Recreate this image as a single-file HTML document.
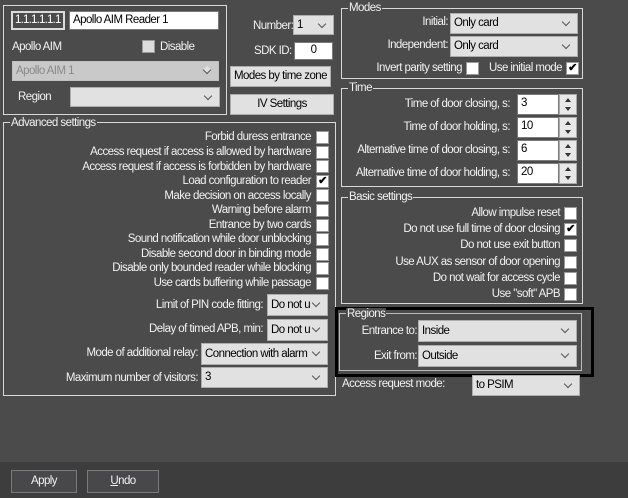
<!DOCTYPE html>
<html><head><meta charset="utf-8"><style>
*{box-sizing:border-box;margin:0;padding:0}
body{width:628px;height:498px;background:#4b4b4b;font-family:"Liberation Sans",sans-serif;font-size:11.5px;letter-spacing:-0.55px;color:#f2f2f2;position:relative;overflow:hidden}
.a{position:absolute;white-space:nowrap}
.gb{position:absolute;border:1px solid #d8d8d8}
.gl{position:absolute;background:#4b4b4b;padding:0 1px;line-height:12px;color:#f2f2f2}
.r{position:absolute;white-space:nowrap;text-align:right;line-height:14px}
.cb{position:absolute;width:13px;height:13px;background:#fff;border:1px solid #9a9a9a;color:#000;font-size:11px;line-height:11px;text-align:center;font-weight:bold}
.dd{position:absolute;background:#e1e1e1;border:1px solid #adadad;color:#000;padding-left:3px;line-height:18px;overflow:hidden;white-space:nowrap}
.dd:after{content:"";position:absolute;right:8px;top:5px;width:5px;height:5px;border-right:1px solid #555;border-bottom:1px solid #555;transform:rotate(45deg);background:#e1e1e1}
.in{position:absolute;background:#fff;border:1px solid #7a7a7a;color:#000;padding-left:3px;line-height:17px;white-space:nowrap;overflow:hidden}
.btn{position:absolute;background:#e1e1e1;border:1px solid #adadad;color:#000;text-align:center;line-height:18px;white-space:nowrap}
.sp{position:absolute;width:18px;background:#e8e8e8;border:1px solid #aaa}
.sp:before{content:"";position:absolute;left:5px;top:3px;border:3px solid transparent;border-bottom:4px solid #333;border-top:0}
.sp:after{content:"";position:absolute;left:5px;bottom:3px;border:3px solid transparent;border-top:4px solid #333;border-bottom:0}
</style></head><body>

<div class="gb" style="left:3px;top:5px;width:224px;height:110px"></div>
<div class="in" style="left:11px;top:11px;width:54px;height:19px;background:#4b4b4b;color:#fff;border:2px solid #ddd;padding-left:2px;line-height:15px;letter-spacing:-0.8px">1.1.1.1.1.1</div>
<div class="in" style="left:69px;top:11px;width:150px;height:19px">Apollo AIM Reader 1</div>
<div class="a" style="left:12px;top:41px">Apollo AIM</div>
<div class="cb" style="left:142px;top:40px;background:#ddd"></div>
<div class="a" style="left:160px;top:41px">Disable</div>
<div class="dd" style="left:12px;top:61px;width:207px;height:20px;background:#c9c9c9;color:#8a8a8a;border-color:#c0c0c0">Apollo AIM 1</div>
<div class="a" style="left:18px;top:91px">Region</div>
<div class="dd" style="left:70px;top:87px;width:150px;height:20px"></div>

<div class="a" style="left:253px;top:20px">Number:</div>
<div class="dd" style="left:293px;top:15px;width:41px;height:20px">1</div>
<div class="a" style="left:254px;top:45px">SDK ID:</div>
<div class="in" style="left:294px;top:42px;width:39px;height:18px;text-align:center;padding:0;line-height:15px">0</div>
<div class="btn" style="left:230px;top:66px;width:101px;height:21px">Modes by time zone</div>
<div class="btn" style="left:230px;top:94px;width:104px;height:21px">IV Settings</div>

<div class="gb" style="left:3px;top:122px;width:333px;height:274px"></div>
<div class="gl" style="left:10px;top:117px">Advanced settings</div>
<div class="r" style="right:317px;top:130px">Forbid duress entrance</div><div class="cb" style="left:316px;top:131px"></div>
<div class="r" style="right:317px;top:145px">Access request if access is allowed by hardware</div><div class="cb" style="left:316px;top:146px"></div>
<div class="r" style="right:317px;top:160px">Access request if access is forbidden by hardware</div><div class="cb" style="left:316px;top:160px"></div>
<div class="r" style="right:317px;top:174px">Load configuration to reader</div><div class="cb" style="left:316px;top:175px">✔</div>
<div class="r" style="right:317px;top:189px">Make decision on access locally</div><div class="cb" style="left:316px;top:189px"></div>
<div class="r" style="right:317px;top:203px">Warning before alarm</div><div class="cb" style="left:316px;top:204px"></div>
<div class="r" style="right:317px;top:218px">Entrance by two cards</div><div class="cb" style="left:316px;top:219px"></div>
<div class="r" style="right:317px;top:232px">Sound notification while door unblocking</div><div class="cb" style="left:316px;top:233px"></div>
<div class="r" style="right:317px;top:247px">Disable second door in binding mode</div><div class="cb" style="left:316px;top:248px"></div>
<div class="r" style="right:317px;top:261px">Disable only bounded reader while blocking</div><div class="cb" style="left:316px;top:262px"></div>
<div class="r" style="right:317px;top:276px">Use cards buffering while passage</div><div class="cb" style="left:316px;top:277px"></div>

<div class="r" style="right:365px;top:298px">Limit of PIN code fitting:</div>
<div class="dd" style="left:267px;top:294px;width:61px;height:22px;line-height:20px">Do not u</div>
<div class="r" style="right:365px;top:322px">Delay of timed APB, min:</div>
<div class="dd" style="left:267px;top:319px;width:61px;height:22px;line-height:20px">Do not u</div>
<div class="r" style="right:430px;top:346px">Mode of additional relay:</div>
<div class="dd" style="left:201px;top:343px;width:127px;height:22px;line-height:20px">Connection with alarm</div>
<div class="r" style="right:430px;top:371px">Maximum number of visitors:</div>
<div class="dd" style="left:201px;top:367px;width:127px;height:21px;line-height:19px">3</div>

<div class="gb" style="left:341px;top:8px;width:242px;height:71px"></div>
<div class="gl" style="left:348px;top:2px">Modes</div>
<div class="r" style="right:180px;top:15px">Initial:</div>
<div class="dd" style="left:450px;top:13px;width:128px;height:21px;line-height:19px">Only card</div>
<div class="r" style="right:180px;top:38px">Independent:</div>
<div class="dd" style="left:450px;top:36px;width:128px;height:21px;line-height:19px">Only card</div>
<div class="r" style="right:166px;top:61px">Invert parity setting</div><div class="cb" style="left:466px;top:62px"></div>
<div class="r" style="right:66px;top:61px">Use initial mode</div><div class="cb" style="left:566px;top:62px">✔</div>

<div class="gb" style="left:341px;top:88px;width:242px;height:99px"></div>
<div class="gl" style="left:348px;top:82px">Time</div>
<div class="r" style="right:118px;top:97px">Time of door closing, s:</div>
<div class="in" style="left:517px;top:94px;width:42px;height:21px">3</div><div class="sp" style="left:559px;top:94px;height:21px"></div>
<div class="r" style="right:118px;top:120px">Time of door holding, s:</div>
<div class="in" style="left:517px;top:117px;width:42px;height:21px">10</div><div class="sp" style="left:559px;top:117px;height:21px"></div>
<div class="r" style="right:118px;top:143px">Alternative time of door closing, s:</div>
<div class="in" style="left:517px;top:140px;width:42px;height:21px">6</div><div class="sp" style="left:559px;top:140px;height:21px"></div>
<div class="r" style="right:118px;top:166px">Alternative time of door holding, s:</div>
<div class="in" style="left:517px;top:163px;width:42px;height:21px">20</div><div class="sp" style="left:559px;top:163px;height:21px"></div>

<div class="gb" style="left:341px;top:197px;width:242px;height:107px"></div>
<div class="gl" style="left:348px;top:191px">Basic settings</div>
<div class="r" style="right:68px;top:206px">Allow impulse reset</div><div class="cb" style="left:564px;top:207px"></div>
<div class="r" style="right:68px;top:222px">Do not use full time of door closing</div><div class="cb" style="left:564px;top:223px">✔</div>
<div class="r" style="right:68px;top:238px">Do not use exit button</div><div class="cb" style="left:564px;top:239px"></div>
<div class="r" style="right:68px;top:255px">Use AUX as sensor of door opening</div><div class="cb" style="left:564px;top:256px"></div>
<div class="r" style="right:68px;top:271px">Do not wait for access cycle</div><div class="cb" style="left:564px;top:272px"></div>
<div class="r" style="right:68px;top:287px">Use "soft" APB</div><div class="cb" style="left:564px;top:288px"></div>

<div class="a" style="left:335px;top:307px;width:259px;height:70px;border:3px solid #000"></div>
<div class="gb" style="left:339px;top:313px;width:243px;height:58px;border-color:#bbb"></div>
<div class="gl" style="left:346px;top:308px">Regions</div>
<div class="r" style="right:211px;top:324px">Entrance to:</div>
<div class="dd" style="left:418px;top:320px;width:159px;height:22px;line-height:20px">Inside</div>
<div class="r" style="right:211px;top:349px">Exit from:</div>
<div class="dd" style="left:418px;top:345px;width:159px;height:22px;line-height:20px">Outside</div>
<div class="a" style="left:342px;top:378px">Access request mode:</div>
<div class="dd" style="left:472px;top:375px;width:108px;height:21px;line-height:19px">to PSIM</div>

<div class="a" style="left:0;top:462px;width:628px;height:36px;background:#3d3d3d"></div>
<div class="a" style="left:11px;top:470px;width:66px;height:23px;border:1px solid #7a7a7a;background:#48484b;text-align:center;line-height:21px">Apply</div>
<div class="a" style="left:87px;top:470px;width:72px;height:23px;border:1px solid #7a7a7a;background:#48484b;text-align:center;line-height:21px"><u>U</u>ndo</div>
</body></html>
